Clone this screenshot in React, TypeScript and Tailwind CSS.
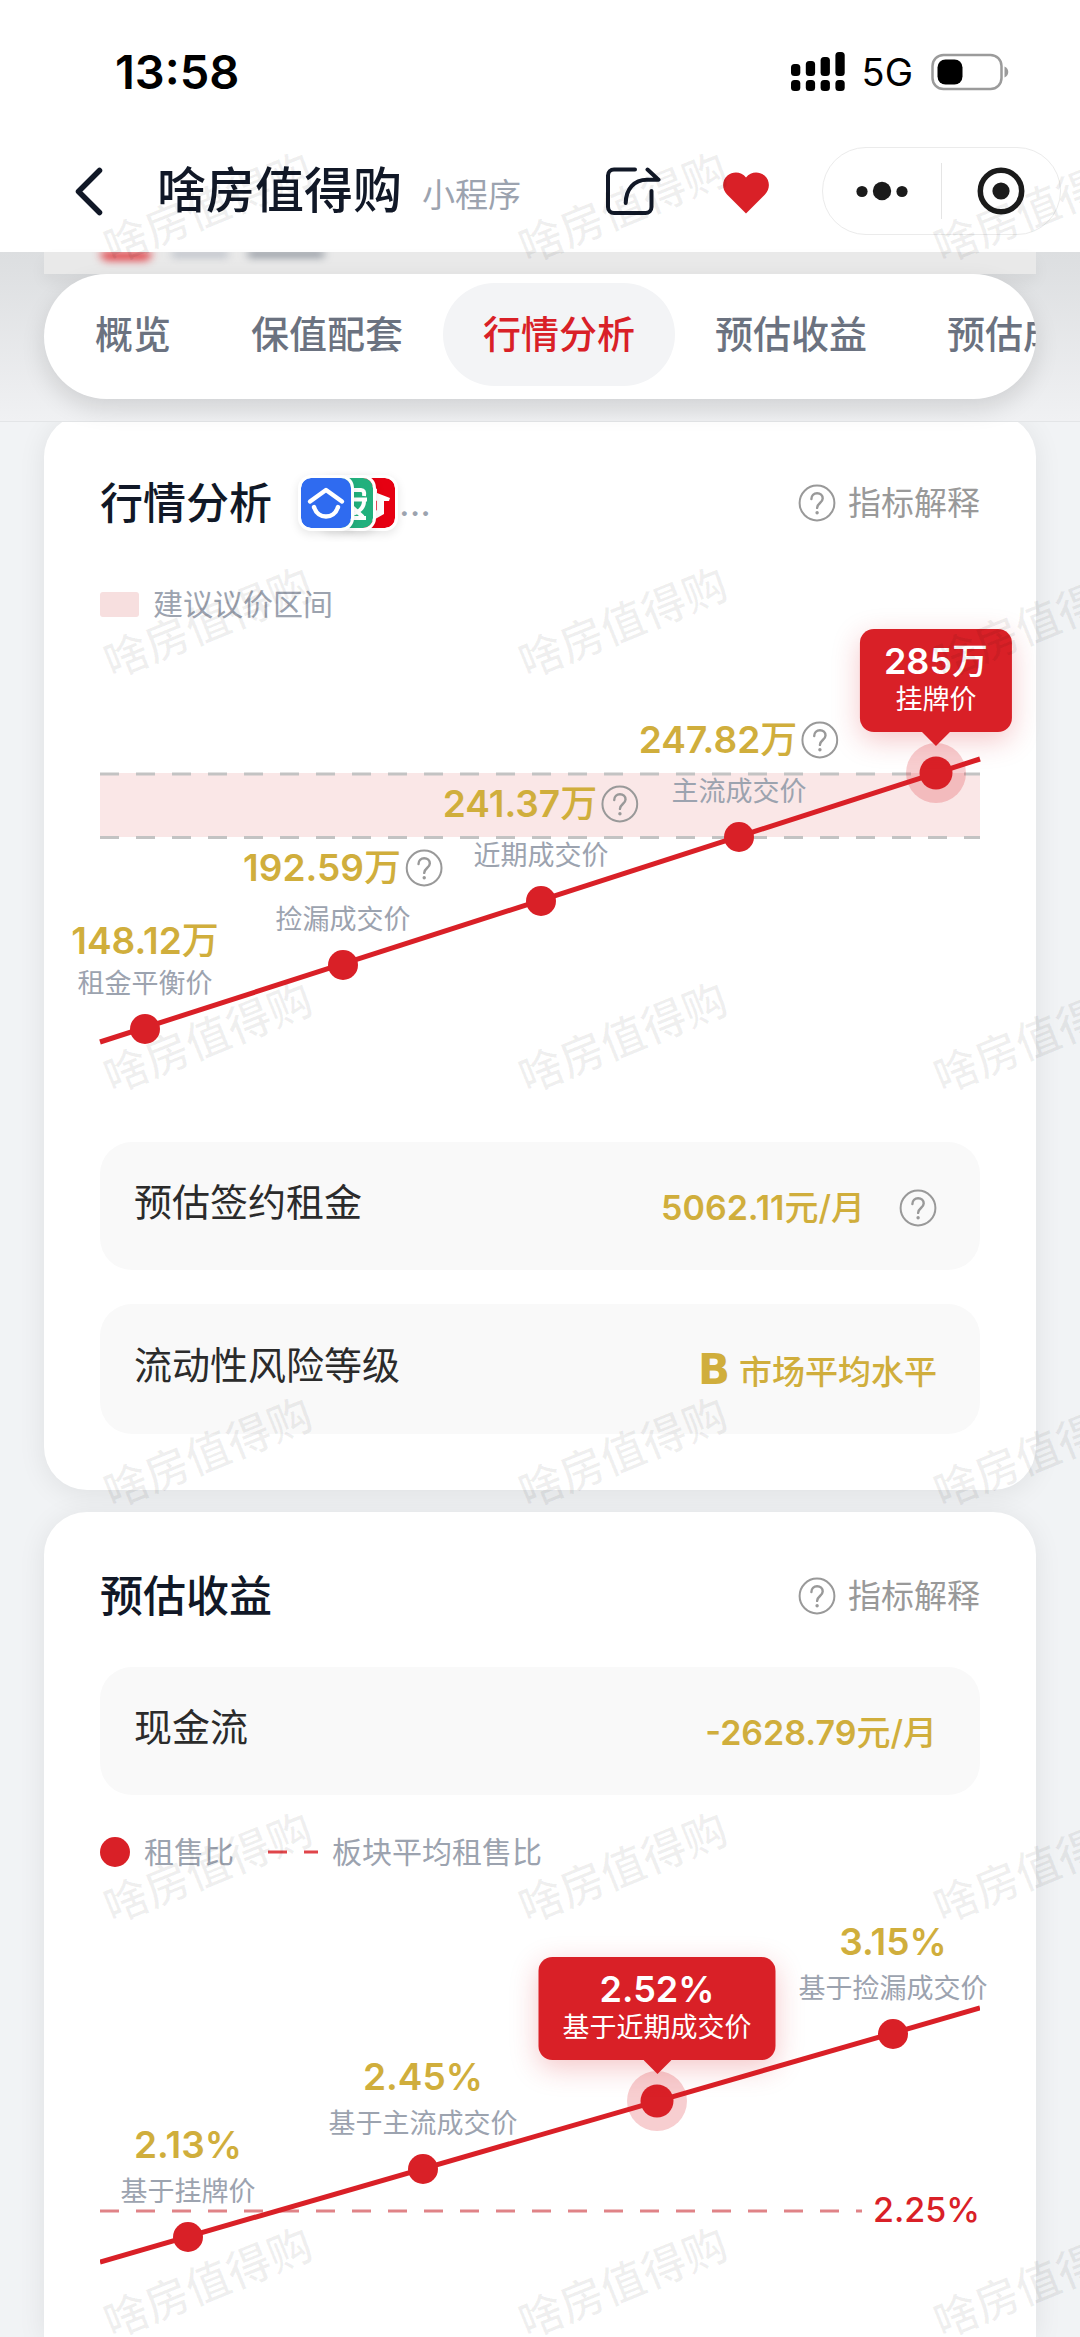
import { useState } from "react";
import type { ReactNode } from "react";

const WATERMARK = "啥房值得购";

type Point = {
  x: number;
  y: number;
  value: string;
  unit?: string;
  label: string;
  help?: boolean;
  active?: boolean;
};

const tabs = ["概览", "保值配套", "行情分析", "预估收益", "预估成本"];

const pricePoints: Point[] = [
  { x: 45, y: 408, value: "148.12", unit: "万", label: "租金平衡价" },
  { x: 243, y: 344, value: "192.59", unit: "万", label: "捡漏成交价", help: true },
  { x: 441, y: 280, value: "241.37", unit: "万", label: "近期成交价", help: true },
  { x: 639, y: 216, value: "247.82", unit: "万", label: "主流成交价", help: true },
  { x: 836, y: 152, value: "285", unit: "万", label: "挂牌价", active: true },
];

const yieldPoints: Point[] = [
  { x: 88, y: 368, value: "2.13%", label: "基于挂牌价" },
  { x: 323, y: 300, value: "2.45%", label: "基于主流成交价" },
  { x: 557, y: 232, value: "2.52%", label: "基于近期成交价", active: true },
  { x: 793, y: 165, value: "3.15%", label: "基于捡漏成交价" },
];

function HelpIcon() {
  return (
    <svg viewBox="0 0 38 38" className="size-[38px] shrink-0" fill="none" stroke="#999" strokeLinecap="round">
      <circle cx="19" cy="19" r="17.4" strokeWidth="2" />
      <path d="M13.4 15c0-3.400 2.500-5.800 5.700-5.800s5.600 2.300 5.600 5.200c0 4.400-5.600 4.800-5.600 9.500" strokeWidth="2.400" />
      <circle cx="19.100" cy="28.700" r="1.700" fill="#999" stroke="none" />
    </svg>
  );
}

function HelpButton({ label }: { label: string }) {
  return (
    <button type="button" aria-label={label} className="flex shrink-0">
      <HelpIcon />
    </button>
  );
}

function StatusBar() {
  return (
    <div className="flex h-[144px] items-center justify-between pr-[71px] pl-[115px] text-black">
      <span className="text-[47px] font-semibold">13:58</span>
      <div className="flex items-center">
        <svg viewBox="0 0 54 40" className="h-10 w-[54px]">
          {[12, 9, 5, 0].map((top, i) => (
            <g key={top}>
              <rect x={i * 14.8} y={top} width="9.300" height={24 - top} rx="3.500" />
              <rect x={i * 14.8} y="28" width="9.300" height="11" rx="3.500" />
            </g>
          ))}
        </svg>
        <span className="ml-[17px] text-[38px]">5G</span>
        <svg viewBox="0 0 78 38" className="ml-[18px] h-[38px] w-[78px]">
          <rect x="1.500" y="2" width="69" height="34" rx="11" fill="none" stroke="#9b9b9b" strokeWidth="2.500" />
          <rect x="6.500" y="6.500" width="25" height="25" rx="8" />
          <path d="M73.500 13.500c5 2 5 9 0 11z" fill="#9b9b9b" />
        </svg>
      </div>
    </div>
  );
}

function NavBar() {
  return (
    <div className="flex items-center pt-[3px] pr-[19px] pb-[17px] pl-[70px]">
      <button type="button" aria-label="返回" className="flex">
        <svg viewBox="0 0 38 50" className="h-[50px] w-[38px]" fill="none" stroke="#111827" strokeWidth="5.500" strokeLinecap="round" strokeLinejoin="round">
          <path d="M29.500 4.500L8.500 25.500l21 21" />
        </svg>
      </button>
      <h1 className="ml-[49px] text-[49px] leading-[60px] font-medium text-[#111827]">啥房值得购</h1>
      <span className="mt-[10px] ml-5 text-[33px] text-[#9ca3af]">小程序</span>
      <div className="ml-auto flex items-center">
        <button type="button" aria-label="分享" className="flex">
          <svg viewBox="0 0 55 48" className="h-12 w-[55px]" fill="none" stroke="#111827" strokeWidth="4" strokeLinecap="round" strokeLinejoin="round">
            <path d="M29 2.500H8a6 6 0 0 0-6 6V40a6 6 0 0 0 6 6h31.500a6 6 0 0 0 6-6V24" />
            <path d="M41.500 2.500l11 10.200H41C28 12.700 20 22 19.700 36" />
          </svg>
        </button>
        <button type="button" aria-label="收藏" className="ml-[62px] flex">
          <svg viewBox="0 0 46 42" className="mt-1 h-[42px] w-[46px]" fill="#d92027">
            <path d="M23 41.500L4 22.500C-1.500 17 -1 8 4.500 3.500 10-1 18.500-.5 23 5.500 27.500-.5 36-1 41.500 3.500 47 8 47.500 17 42 22.500z" />
          </svg>
        </button>
        <div className="ml-[53px] flex h-[88px] w-[239px] items-center rounded-full border border-[#ebebeb]">
          <button type="button" aria-label="更多" className="flex flex-1 justify-center">
            <svg viewBox="0 0 52 20" className="h-5 w-[52px]" fill="#1b1b1b">
              <circle cx="6" cy="10.500" r="5.600" />
              <circle cx="26" cy="10" r="9.200" />
              <circle cx="46" cy="10.500" r="5.600" />
            </svg>
          </button>
          <span className="h-[56px] w-px bg-[#e5e5e5]" />
          <button type="button" aria-label="关闭" className="flex flex-1 justify-center">
            <svg viewBox="0 0 48 48" className="size-12" fill="none" stroke="#1b1b1b">
              <circle cx="24" cy="24" r="20.700" strokeWidth="5.500" />
              <circle cx="24" cy="24" r="8.600" fill="#1b1b1b" stroke="none" />
            </svg>
          </button>
        </div>
      </div>
    </div>
  );
}

function TabStrip() {
  const [active, setActive] = useState("行情分析");

  return (
    <div className="relative z-10 border-b border-[#e3e5e7] bg-linear-to-b from-[#dcdee0] to-[#f0f1f3] px-11">
      {/* tail of the card that is scrolled under the header */}
      <div className="h-[22px] bg-[#e9e9e9] shadow-[0_8px_16px_rgba(0,0,0,0.05)]">
        <div className="h-full overflow-hidden">
          <div className="flex gap-5 pl-14 blur-[4px]">
            <span className="h-2 w-[52px] rounded-b-xl bg-[#e0282f]" />
            <span className="h-1 w-14 bg-gray-400" />
            <span className="h-1 w-[76px] bg-gray-600" />
          </div>
        </div>
      </div>
      <nav
        aria-label="报告"
        className="relative mb-[22px] flex overflow-hidden rounded-full bg-white pt-[9px] pr-[11px] pb-[13px] pl-[11px] shadow-[0_10px_24px_rgba(0,0,0,0.12)]"
      >
        {tabs.map((tab) => (
          <button
            key={tab}
            type="button"
            aria-current={tab === active ? "true" : undefined}
            onClick={() => setActive(tab)}
            className={
              tab === active
                ? "h-[103px] shrink-0 rounded-full bg-[#f3f4f6] px-10 text-[38px] font-medium text-[#d92027]"
                : "h-[103px] shrink-0 rounded-full px-10 text-[38px] font-medium text-[#6b7280]"
            }
          >
            {tab}
          </button>
        ))}
      </nav>
    </div>
  );
}

function SourceIcons() {
  return (
    <div className="flex items-center">
      <span className="relative z-20 flex size-14 rounded-[13px] border-[3px] border-white bg-[#2f6bf0] bg-clip-padding shadow-[0_3px_10px_rgba(0,0,0,0.1)]">
        <svg viewBox="0 0 50 50" fill="none" stroke="#fff" strokeWidth="4.400" strokeLinecap="round" strokeLinejoin="round">
          <path d="M9 23.500l16-11.500 16 11.500" />
          <path d="M13 29c2 6.500 7 9.500 12 9.500s10-3 12-9.500" />
        </svg>
      </span>
      <span className="relative z-10 -ml-[34px] flex size-14 rounded-[13px] border-[3px] border-white bg-[#22b07d] bg-clip-padding shadow-[0_3px_10px_rgba(0,0,0,0.1)]">
        <svg viewBox="0 0 50 50" fill="none" stroke="#fff" strokeWidth="4" strokeLinejoin="round">
          <path d="M12 17v-5h26q4 0 3 6" />
          <path d="M12 21.500h32M26 15v6" />
          <path d="M41 23c0 8-6 11-13 14M28 28l12 11" />
          <path d="M22 40h21" />
        </svg>
      </span>
      <span className="-ml-[34px] flex size-14 rounded-[13px] border-[3px] border-white bg-[#e60012] bg-clip-padding shadow-[0_3px_10px_rgba(0,0,0,0.1)]">
        <svg viewBox="0 0 50 50">
          <path d="M25 7l7 4v4l13 5-1 3h-5v13l-14 8z" fill="#fff" />
          <path d="M25 20l7 3v9l-7 5z" fill="#e60012" opacity="0.7" />
        </svg>
      </span>
      <span className="ml-px text-[37px] leading-[46px] text-[#9ca3af]">...</span>
    </div>
  );
}

function CardHeader({ title, children }: { title: string; children?: ReactNode }) {
  return (
    <div className="flex items-center justify-between">
      <div className="flex items-center gap-[26px]">
        <h2 className="text-[43px] leading-[46px] font-medium text-[#111827]">{title}</h2>
        {children}
      </div>
      <button type="button" className="flex items-center gap-3 text-[33px] leading-[38px] text-[#999]">
        <HelpIcon />
        指标解释
      </button>
    </div>
  );
}

function MetricRow({ label, children }: { label: string; children: ReactNode }) {
  return (
    <div className="flex items-center justify-between rounded-[32px] bg-[#f9f9f9] py-[34px] pr-[43px] pl-[34px]">
      <span className="pb-2 text-[38px] leading-[52px] text-[#2b2b2b]">{label}</span>
      <div className="flex items-center pt-1 text-[34px] leading-[52px] font-semibold text-[#d0ae3c]">{children}</div>
    </div>
  );
}

function PointLabel({ point, height }: { point: Point; height: number }) {
  const style = { left: `${(point.x / 880) * 100}%`, top: `${(point.y / height) * 100}%` };
  const value = (
    <>
      {point.value}
      {point.unit && <span className="font-medium">{point.unit}</span>}
    </>
  );

  if (point.active) {
    return (
      <div className="absolute -translate-x-1/2 -translate-y-full pb-[27px] text-white" style={style}>
        <div className="rounded-[14px] bg-[#d92027] px-6 pt-[10px] pb-[15px] text-center whitespace-nowrap shadow-[0_8px_28px_rgba(217,32,39,0.25)]">
          <p className="text-[36px] leading-[44px] font-semibold">{value}</p>
          <p className="text-[27px] leading-[34px]">{point.label}</p>
        </div>
        <svg viewBox="0 0 28 14" className="mx-auto h-[14px] w-7" fill="#d92027">
          <path d="M0 0h28L14 14z" />
        </svg>
      </div>
    );
  }

  // lines with a help button are taller, plain percentages sit in between
  const rowHeight = point.help ? "h-16" : point.unit ? "h-[46px]" : "h-[54px]";

  return (
    <div className="absolute -translate-x-1/2 -translate-y-full pb-[25px] whitespace-nowrap" style={style}>
      <div className={`flex items-center justify-center gap-1 ${rowHeight}`}>
        <span className="text-[37px] font-semibold text-[#d0ae3c]">{value}</span>
        {point.help && <HelpButton label={`${point.label}说明`} />}
      </div>
      <p className="text-center text-[27px] leading-[40px] text-[#9ca3af]">{point.label}</p>
    </div>
  );
}

function PointDot({ point }: { point: Point }) {
  return (
    <g fill="#d92027">
      {point.active && <circle cx={point.x} cy={point.y} r="30" opacity="0.22" />}
      <circle cx={point.x} cy={point.y} r={point.active ? 16.5 : 15} />
    </g>
  );
}

function PriceChart() {
  return (
    <div className="relative">
      <svg viewBox="0 0 880 521" className="block w-full overflow-visible">
        <rect x="0" y="152" width="880" height="64" fill="#fae7e7" />
        <path d="M0 153H880M0 216.500H880" stroke="#c3c3c3" strokeWidth="3" strokeDasharray="19 17" />
        <path d="M0 421L880 138" stroke="#d92027" strokeWidth="5" />
        {pricePoints.map((point) => (
          <PointDot key={point.label} point={point} />
        ))}
      </svg>
      {pricePoints.map((point) => (
        <PointLabel key={point.label} point={point} height={521} />
      ))}
    </div>
  );
}

function YieldChart() {
  return (
    <div className="relative">
      <svg viewBox="0 0 880 467" className="block w-full">
        <path d="M0 342H762" stroke="#e08387" strokeWidth="3" strokeDasharray="19 17" />
        <path d="M0 393L880 139" stroke="#d92027" strokeWidth="5" />
        {yieldPoints.map((point) => (
          <PointDot key={point.label} point={point} />
        ))}
        <text x="880" y="353" textAnchor="end" fill="#d92027" className="text-[34px] font-medium">
          2.25%
        </text>
      </svg>
      {yieldPoints.map((point) => (
        <PointLabel key={point.label} point={point} height={467} />
      ))}
    </div>
  );
}

function Watermarks() {
  return (
    <div aria-hidden="true" className="pointer-events-none absolute inset-0 z-30 grid auto-rows-[415px] grid-cols-[repeat(3,415px)] overflow-hidden">
      {Array.from({ length: 18 }, (_, i) => (
        <span key={i} className="flex items-center justify-center text-[44px] font-medium text-black/6">
          <span className="-rotate-22">{WATERMARK}</span>
        </span>
      ))}
    </div>
  );
}

export default function App() {
  return (
    <div className="relative flex min-h-screen flex-col overflow-hidden bg-[#f1f3f5] font-[Inter,'Noto_Sans_CJK_SC',sans-serif]">
      <header className="bg-white">
        <StatusBar />
        <NavBar />
      </header>
      <TabStrip />

      <main className="-mt-2 flex flex-1 flex-col gap-[22px] px-11">
        <section className="rounded-[43px] bg-white px-14 pt-[61px] pb-14 shadow-[0_4px_28px_rgba(0,0,0,0.08)]">
          <CardHeader title="行情分析">
            <SourceIcons />
          </CardHeader>
          <div className="mt-14 flex items-center gap-[14px] text-[30px] leading-[34px] text-[#9ca3af]">
            <span className="h-[25px] w-[39px] rounded-[3px] bg-[#f7dfdf]" />
            建议议价区间
          </div>
          <PriceChart />
          <div className="flex flex-col gap-[34px]">
            <MetricRow label="预估签约租金">
              <span>
                5062.11<span className="font-medium">元/月</span>
              </span>
              <span className="ml-[34px] flex">
                <HelpButton label="预估签约租金说明" />
              </span>
            </MetricRow>
            <MetricRow label="流动性风险等级">
              <span className="flex items-baseline gap-[9px] leading-[56px]">
                <span className="font-['DejaVu_Sans'] text-[42px] font-bold">B</span>
                <span className="text-[33px] font-medium">市场平均水平</span>
              </span>
            </MetricRow>
          </div>
        </section>

        <section className="flex-1 rounded-t-[43px] bg-white px-14 pt-[61px] shadow-[0_4px_28px_rgba(0,0,0,0.08)]">
          <CardHeader title="预估收益" />
          <div className="mt-12">
            <MetricRow label="现金流">
              <span>
                -2628.79<span className="font-medium">元/月</span>
              </span>
            </MetricRow>
          </div>
          <div className="mt-10 flex items-center gap-[14px] text-[30px] leading-[34px] text-[#9ca3af]">
            <span className="size-[30px] rounded-full bg-[#d92027]" />
            租售比
            <svg viewBox="0 0 50 4" className="ml-5 h-1 w-[50px]">
              <path d="M0 2H50" stroke="#e0454a" strokeWidth="3" strokeDasharray="19 17" />
            </svg>
            板块平均租售比
          </div>
          <YieldChart />
        </section>
      </main>

      <Watermarks />
    </div>
  );
}
